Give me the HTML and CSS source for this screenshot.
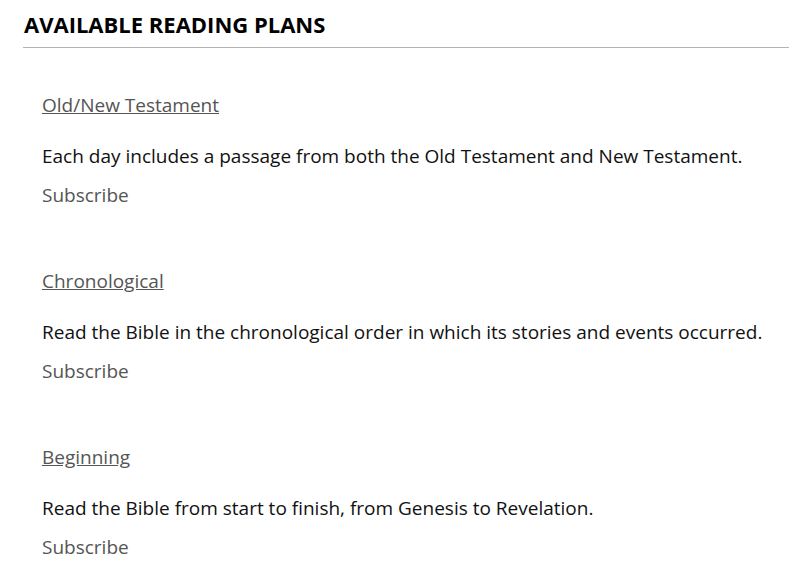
FILE: index.html
```html
<!DOCTYPE html>
<html>
<head>
<meta charset="utf-8">
<link rel="stylesheet" href="styles.css">
</head>
<body>
<div class="page">
  <h2 class="title">AVAILABLE READING PLANS</h2>
  <div class="plans">
    <div class="plan">
      <a class="plan-name" href="#">Old/New Testament</a>
      <p class="plan-desc">Each day includes a passage from both the Old Testament and New Testament.</p>
      <a class="subscribe" href="#">Subscribe</a>
    </div>
    <div class="plan">
      <a class="plan-name" href="#">Chronological</a>
      <p class="plan-desc">Read the Bible in the chronological order in which its stories and events occurred.</p>
      <a class="subscribe" href="#">Subscribe</a>
    </div>
    <div class="plan">
      <a class="plan-name" href="#">Beginning</a>
      <p class="plan-desc">Read the Bible from start to finish, from Genesis to Revelation.</p>
      <a class="subscribe" href="#">Subscribe</a>
    </div>
  </div>
</div>
</body>
</html>
```
FILE: styles.css
```css
html, body {
  margin: 0;
  padding: 0;
  background: #fff;
}
body {
  font-family: "Open Sans", "Noto Sans", sans-serif;
  color: #111;
}
.page {
  padding: 10px 0 0 23px;
}
.title {
  margin: 0;
  padding: 0 0 9px 1px;
  font-size: 22px;
  font-weight: 700;
  line-height: 28px;
  color: #000;
  border-bottom: 1px solid #b3b3b3;
}
.plans {
  display: flex;
  flex-direction: column;
  gap: 60px;
  padding: 44px 0 0 19px;
}
.plan {
  display: flex;
  flex-direction: column;
  align-items: flex-start;
}
.plan-name {
  font-size: 19px;
  line-height: 26px;
  color: #555;
  text-decoration: underline;
}
.plan-desc {
  margin: 25px 0 0;
  font-size: 19px;
  line-height: 26px;
  color: #111;
}
.subscribe {
  margin-top: 13px;
  font-size: 19px;
  line-height: 26px;
  color: #555;
  text-decoration: none;
}
```
